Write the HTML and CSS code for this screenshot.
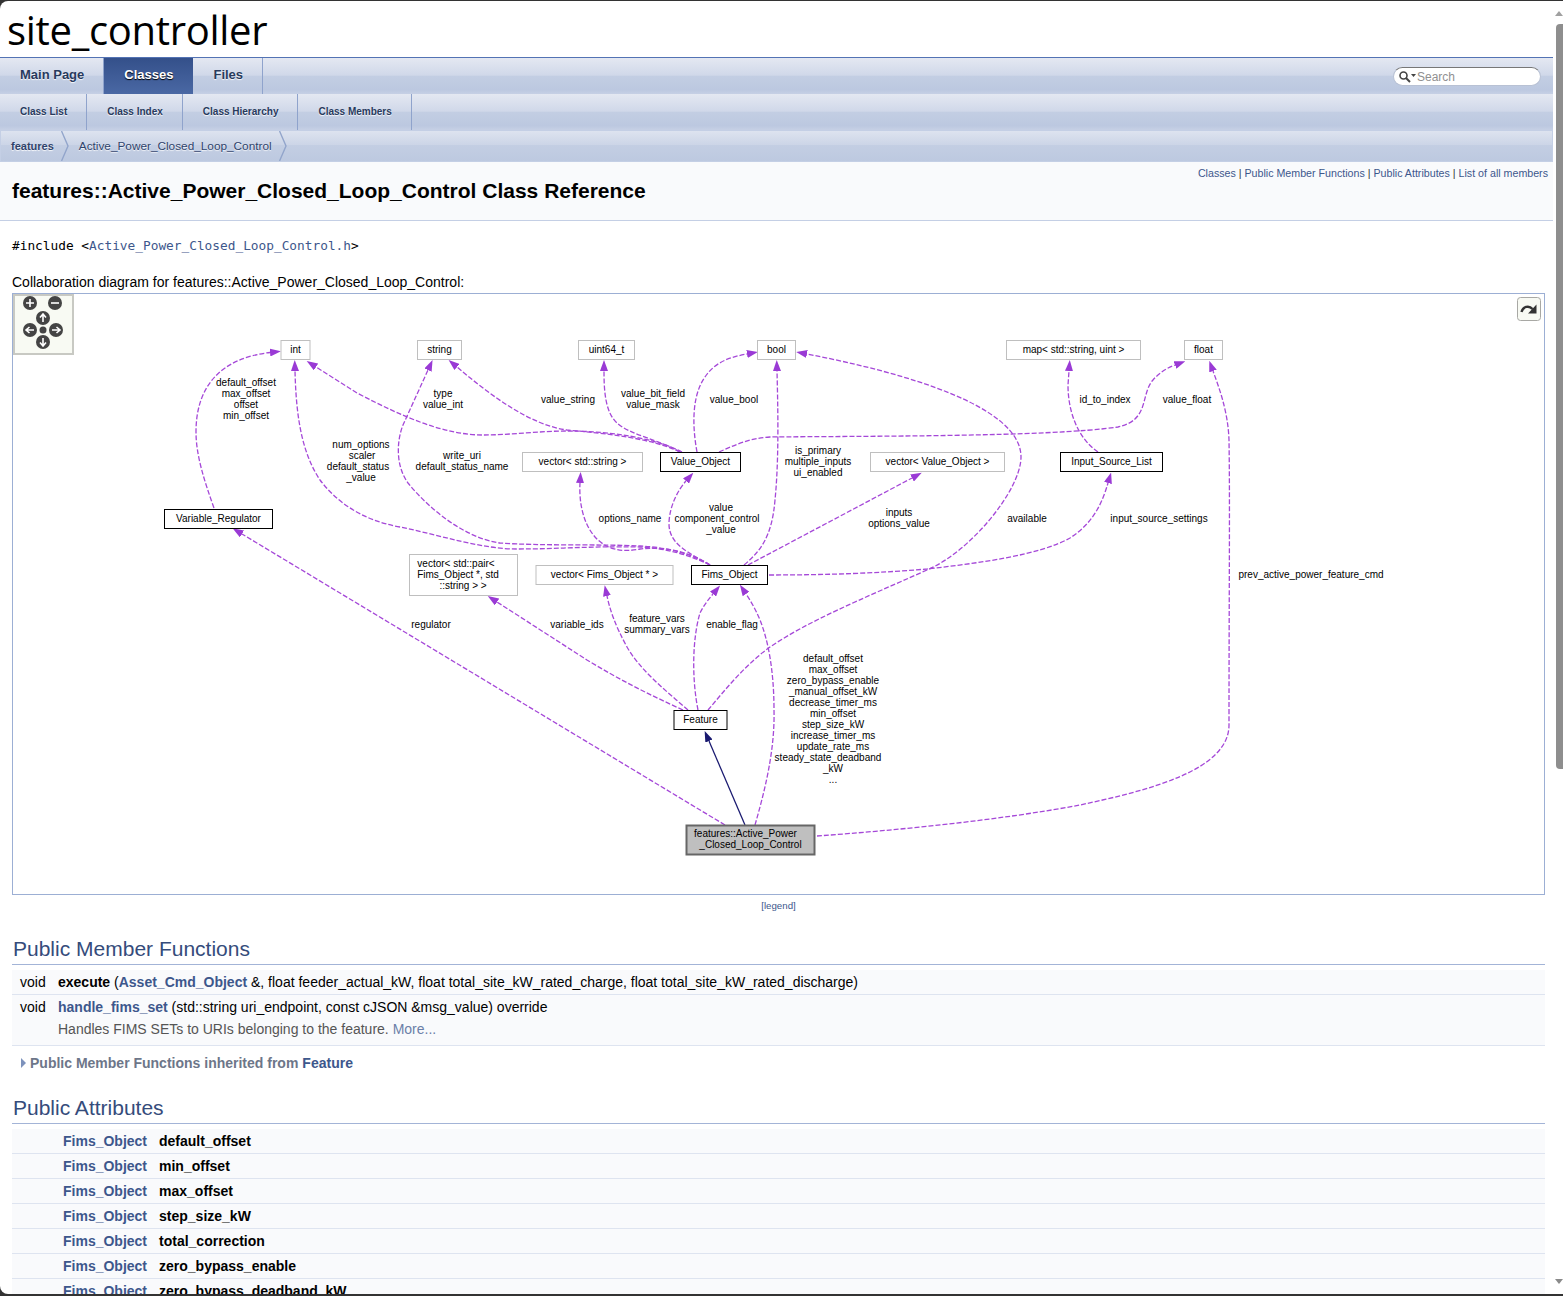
FILE: index.html
```html
<!DOCTYPE html>
<html>
<head>
    <title>site_controller: features::Active_Power_Closed_Loop_Control Class Reference</title>
    <link rel="stylesheet" href="styles.css">
</head>
<body>
<div class="window">
<div class="page">
    <div class="titlearea">site_controller</div>

    <div class="tabs">
        <a class="tab">Main Page</a>
        <a class="tab current">Classes</a>
        <a class="tab">Files</a>
        <div class="search">
            <svg class="search-icon" width="18" height="14" viewBox="0 0 18 14">
                <circle cx="5.5" cy="5.5" r="3.5" class="lens"/>
                <path d="M8 8l4 4" class="handle"/>
                <path d="M13 4h5l-2.5 3z" class="caret"/>
            </svg>
            <span>Search</span>
        </div>
    </div>
    <div class="tabs tabs2">
        <a class="tab">Class List</a>
        <a class="tab">Class Index</a>
        <a class="tab">Class Hierarchy</a>
        <a class="tab">Class Members</a>
    </div>
    <div class="navpath">
        <a class="crumb strong">features</a>
        <svg class="chevron" width="8" height="30" viewBox="0 0 8 30"><path d="M0.5 0L7 15L0.5 30"/></svg>
        <a class="crumb">Active_Power_Closed_Loop_Control</a>
        <svg class="chevron" width="8" height="30" viewBox="0 0 8 30"><path d="M0.5 0L7 15L0.5 30"/></svg>
    </div>

    <div class="header">
        <div class="summary"><a>Classes</a> | <a>Public Member Functions</a> | <a>Public Attributes</a> | <a>List of all members</a></div>
        <h1>features::Active_Power_Closed_Loop_Control Class Reference</h1>
    </div>

    <div class="contents">
        <p class="include">#include &lt;<a>Active_Power_Closed_Loop_Control.h</a>&gt;</p>
        <p class="diagram-title">Collaboration diagram for features::Active_Power_Closed_Loop_Control:</p>

        <div class="diagram">
            <svg width="1531" height="600" viewBox="13 294 1531 600">
                <defs>
                    <marker id="head" markerUnits="userSpaceOnUse" markerWidth="11" markerHeight="8" refX="0" refY="4" orient="auto">
                        <path d="M0 0L11 4L0 8z" class="head-purple"/>
                    </marker>
                    <marker id="head-navy" markerUnits="userSpaceOnUse" markerWidth="11" markerHeight="8" refX="0" refY="4" orient="auto">
                        <path d="M0 0L11 4L0 8z" class="head-navy"/>
                    </marker>
                </defs>

                <!-- edges -->
                <g class="edges">
                    <path d="M214 508C204 480 196 455 196 432C196 385 222 358 270 352.5"/>
                    <path d="M682 452C655 438 610 431 567 431C540 431 510 435 483 435C445 435 405 418 357 393L316 367"/>
                    <path d="M710 565C690 555 665 548 640 547C590 546 560 549 517 549C480 549 440 535 400 527C360 520 335 500 320 480C300 450 296 410 295 371"/>
                    <path d="M680 452C650 438 610 434 567 430C530 425 490 395 457 367"/>
                    <path d="M710 565C690 553 665 547 640 546C600 544 540 546 500 543C465 538 430 510 408 483C395 465 397 440 403 425L428 370"/>
                    <path d="M680 452C660 440 630 435 617 423C605 412 604 390 604 371"/>
                    <path d="M697 452C692 425 692 395 705 377C715 362 730 357 747 354"/>
                    <path d="M744 565C762 550 772 535 775 500C779 460 778 410 777 371"/>
                    <path d="M708 710C725 690 745 665 770 647C810 620 860 600 927 570C970 552 1021 490 1021 457C1021 405 900 372 807 354"/>
                    <path d="M719 452C735 445 750 438 770 437C860 436 1050 437 1118 427C1150 420 1140 395 1153 380C1160 372 1167 368 1175 365"/>
                    <path d="M1098 452C1080 440 1068 415 1068 385L1069 371"/>
                    <path d="M710 565C690 553 668 545 669 522C670 505 678 490 686 481"/>
                    <path d="M710 565C690 552 665 546 640 549C625 552 610 551 598 540C582 525 579 500 580 483"/>
                    <path d="M748 565L912 478"/>
                    <path d="M769 575C830 575 880 573 927 569C980 563 1040 555 1070 538C1095 522 1103 500 1108 483"/>
                    <path d="M725 825L242 534"/>
                    <path d="M683 710C650 695 620 680 587 660L497 602"/>
                    <path d="M688 710C665 690 640 670 627 647C615 625 610 610 607 596"/>
                    <path d="M698 710C692 680 692 640 700 613C704 605 708 600 713 594"/>
                    <path d="M755 825C765 790 775 750 774 710C774 670 768 640 760 620C755 608 750 600 746 594"/>
                    <path d="M817 836C900 830 1000 820 1080 805C1150 790 1229 770 1229 725C1229 600 1230 500 1229 440C1228 410 1218 385 1213 371"/>
                </g>
                <path class="edge-navy" d="M745 825L709 741"/>

                <!-- edge labels -->
                <g class="labels">
                    <text x="246" y="386">default_offset</text>
                    <text x="246" y="397">max_offset</text>
                    <text x="246" y="408">offset</text>
                    <text x="246" y="419">min_offset</text>
                    <text x="443" y="397">type</text>
                    <text x="443" y="408">value_int</text>
                    <text x="568" y="403">value_string</text>
                    <text x="653" y="397">value_bit_field</text>
                    <text x="653" y="408">value_mask</text>
                    <text x="734" y="403">value_bool</text>
                    <text x="1105" y="403">id_to_index</text>
                    <text x="1187" y="403">value_float</text>
                    <text x="361" y="448">num_options</text>
                    <text x="362" y="459">scaler</text>
                    <text x="358" y="470">default_status</text>
                    <text x="361" y="481">_value</text>
                    <text x="462" y="459">write_uri</text>
                    <text x="462" y="470">default_status_name</text>
                    <text x="818" y="454">is_primary</text>
                    <text x="818" y="465">multiple_inputs</text>
                    <text x="818" y="476">ui_enabled</text>
                    <text x="721" y="511">value</text>
                    <text x="717" y="522">component_control</text>
                    <text x="721" y="533">_value</text>
                    <text x="630" y="522">options_name</text>
                    <text x="1027" y="522">available</text>
                    <text x="1159" y="522">input_source_settings</text>
                    <text x="899" y="516">inputs</text>
                    <text x="899" y="527">options_value</text>
                    <text x="1311" y="578">prev_active_power_feature_cmd</text>
                    <text x="431" y="628">regulator</text>
                    <text x="577" y="628">variable_ids</text>
                    <text x="657" y="622">feature_vars</text>
                    <text x="657" y="633">summary_vars</text>
                    <text x="732" y="628">enable_flag</text>
                    <text x="833" y="662">default_offset</text>
                    <text x="833" y="673">max_offset</text>
                    <text x="833" y="684">zero_bypass_enable</text>
                    <text x="833" y="695">_manual_offset_kW</text>
                    <text x="833" y="706">decrease_timer_ms</text>
                    <text x="833" y="717">min_offset</text>
                    <text x="833" y="728">step_size_kW</text>
                    <text x="833" y="739">increase_timer_ms</text>
                    <text x="833" y="750">update_rate_ms</text>
                    <text x="828" y="761">steady_state_deadband</text>
                    <text x="833" y="772">_kW</text>
                    <text x="833" y="783">...</text>
                </g>

                <!-- undocumented nodes -->
                <g class="node-grey">
                    <rect x="281" y="340.5" width="29" height="19"/>
                    <rect x="417.5" y="340.5" width="44" height="19"/>
                    <rect x="578.5" y="340.5" width="56" height="19"/>
                    <rect x="757.5" y="340.5" width="38" height="19"/>
                    <rect x="1006.5" y="340.5" width="134" height="19"/>
                    <rect x="1184.5" y="340.5" width="38" height="19"/>
                    <rect x="522.5" y="452.5" width="120" height="19"/>
                    <rect x="870.5" y="452.5" width="134" height="19"/>
                    <rect x="409.5" y="554.5" width="108" height="41"/>
                    <rect x="536" y="565.5" width="137" height="19"/>
                </g>
                <!-- documented nodes -->
                <g class="node">
                    <rect x="660.5" y="452.5" width="80" height="19"/>
                    <rect x="1060.5" y="452.5" width="102" height="19"/>
                    <rect x="164.5" y="509.5" width="108" height="19"/>
                    <rect x="691.5" y="565.5" width="76" height="19"/>
                    <rect x="674" y="710.5" width="53" height="19"/>
                </g>
                <rect class="node-main" x="686.5" y="825.5" width="128" height="29"/>

                <g class="node-text">
                    <text x="295.5" y="353">int</text>
                    <text x="439.5" y="353">string</text>
                    <text x="606.5" y="353">uint64_t</text>
                    <text x="776.5" y="353">bool</text>
                    <text x="1073.5" y="353">map&lt; std::string, uint &gt;</text>
                    <text x="1203.5" y="353">float</text>
                    <text x="582.5" y="465">vector&lt; std::string &gt;</text>
                    <text x="700.5" y="465">Value_Object</text>
                    <text x="937.5" y="465">vector&lt; Value_Object &gt;</text>
                    <text x="1111.5" y="465">Input_Source_List</text>
                    <text x="218.5" y="522">Variable_Regulator</text>
                    <text x="604.5" y="578">vector&lt; Fims_Object * &gt;</text>
                    <text x="729.5" y="578">Fims_Object</text>
                    <text x="700.5" y="723">Feature</text>
                    <text x="745.5" y="837">features::Active_Power</text>
                    <text x="750.5" y="848">_Closed_Loop_Control</text>
                    <text x="456" y="567">vector&lt; std::pair&lt;</text>
                    <text x="458" y="578">Fims_Object *, std</text>
                    <text x="463" y="589">::string &gt; &gt;</text>
                </g>

                <!-- pan and zoom control -->
                <g class="panel">
                    <rect x="14" y="295" width="59" height="59"/>
                </g>
                <g class="panel-btn">
                    <circle cx="30" cy="303" r="7"/>
                    <circle cx="55" cy="303" r="7"/>
                    <circle cx="43" cy="318" r="7"/>
                    <circle cx="30" cy="330" r="7"/>
                    <circle cx="43" cy="330" r="3.5"/>
                    <circle cx="56" cy="330" r="7"/>
                    <circle cx="43" cy="342" r="7"/>
                </g>
                <g class="panel-glyph">
                    <path d="M26 303h8M30 299v8"/>
                    <path d="M51 303h8"/>
                    <path d="M43 322v-7M40 317.5l3-3.5l3 3.5"/>
                    <path d="M34 330h-7M29.5 327l-3.5 3l3.5 3"/>
                    <path d="M52 330h7M56.5 327l3.5 3l-3.5 3"/>
                    <path d="M43 338v7M40 342.500l3 3.500l3-3.500"/>
                </g>

                <!-- full screen button -->
                <rect class="full-btn" x="1517.5" y="297.5" width="23" height="23" rx="3"/>
                <path class="full-arrow" d="M1521.500 312C1523 306.500 1529 305 1532.500 309"/>
                <path class="full-tip" d="M1536.500 304.500V313.500H1528z"/>
            </svg>
        </div>
        <div class="legend">[legend]</div>

        <h2>Public Member Functions</h2>
        <div class="memberlist">
            <div class="member">
                <span class="type">void</span>
                <span class="decl"><b>execute</b> (<a>Asset_Cmd_Object</a> &amp;, float feeder_actual_kW, float total_site_kW_rated_charge, float total_site_kW_rated_discharge)</span>
            </div>
            <div class="member">
                <span class="type">void</span>
                <div class="decl">
                    <a>handle_fims_set</a> (std::string uri_endpoint, const cJSON &amp;msg_value) override
                    <div class="brief">Handles FIMS SETs to URIs belonging to the feature. <span class="more">More...</span></div>
                </div>
            </div>
        </div>
        <div class="inherited"><span class="arrow"></span>Public Member Functions inherited from <a>Feature</a></div>

        <h2 class="attrs">Public Attributes</h2>
        <div class="memberlist">
            <div class="member attr"><a class="attr-type">Fims_Object</a><b>default_offset</b></div>
            <div class="member attr"><a class="attr-type">Fims_Object</a><b>min_offset</b></div>
            <div class="member attr"><a class="attr-type">Fims_Object</a><b>max_offset</b></div>
            <div class="member attr"><a class="attr-type">Fims_Object</a><b>step_size_kW</b></div>
            <div class="member attr"><a class="attr-type">Fims_Object</a><b>total_correction</b></div>
            <div class="member attr"><a class="attr-type">Fims_Object</a><b>zero_bypass_enable</b></div>
            <div class="member attr"><a class="attr-type">Fims_Object</a><b>zero_bypass_deadband_kW</b></div>
        </div>
    </div>
</div>
<div class="scrollbar">
    <div class="scroll-up"></div>
    <div class="scroll-thumb"></div>
    <div class="scroll-down"></div>
</div>
</div>
</body>
</html>
```

FILE: styles.css
```css
html, body {
    margin: 0;
    padding: 0;
    height: 100%;
    overflow: hidden;
    background-color: #333;
}

body {
    font-family: "Liberation Sans", Arial, sans-serif;
    font-size: 14px;
    color: #000;
}

a {
    color: #3d578c;
}

.window {
    display: flex;
    height: 1293px;
    margin-top: 1px;
    background-color: #fff;
    border-radius: 8px 0 0 8px;
    overflow: hidden;
}

.page {
    flex: 1;
    min-width: 0;
    overflow: hidden;
}

.titlearea {
    font-family: "Open Sans", sans-serif;
    font-size: 40px;
    letter-spacing: -0.3px;
    line-height: 58px;
    height: 56px;
    padding-left: 7px;
    border-bottom: 1px solid #5373b4;
}

/* tab bars */
.tabs {
    display: flex;
    height: 36px;
    background: linear-gradient(#e4e8f2 0, #d0d8e9 48%, #c3cee3 50%, #bcc8e0 88%, #c6d0e5 100%);
}

.tab {
    display: block;
    padding: 0 19px 0 20px;
    line-height: 34px;
    font-size: 13px;
    font-weight: bold;
    color: #283a5d;
    text-shadow: 0 1px 1px rgba(255, 255, 255, 0.9);
    border-right: 1px solid #8fa3cc;
    height: 36px;
    box-sizing: border-box;
}

.tab.current {
    padding-right: 20px;
    color: #fff;
    background: linear-gradient(#34508a, #4a68a4);
    text-shadow: 0 1px 1px #000;
    border-right: none;
}

.tabs2 .tab {
    font-size: 10px;
    line-height: 36px;
}

.search {
    display: flex;
    align-items: center;
    margin: 9px 12px 0 auto;
    width: 148px;
    height: 19px;
    box-sizing: border-box;
    background-color: #fff;
    border-radius: 10px;
    border: 1px solid #b8c1d4;
    border-top-color: #777;
    font-size: 12px;
    color: #909090;
    padding-left: 4px;
}

.search-icon {
    margin-right: 1px;
}

.lens {
    fill: none;
    stroke: #444;
    stroke-width: 1.6;
}

.handle {
    stroke: #444;
    stroke-width: 2;
}

.caret {
    fill: #444;
}

/* breadcrumb */
.navpath {
    display: flex;
    align-items: center;
    height: 32px;
    box-sizing: border-box;
    border: 1px solid #c4cfe5;
    background: linear-gradient(#dde3ef 0, #ccd5e7 46%, #c3cee3 48%, #bdc9e0 100%);
    padding-left: 10px;
    font-size: 11.8px;
}

.crumb {
    color: #2f436b;
    text-shadow: 0 1px 1px rgba(255, 255, 255, 0.9);
}

.crumb.strong {
    font-size: 11px;
    font-weight: bold;
    margin-right: 7px;
}

.chevron {
    margin-right: 10px;
    fill: none;
    stroke: #92a5cb;
    stroke-width: 1.4;
}

.navpath .crumb + .chevron + .crumb {
    margin-right: 7px;
}

/* page header */
.header {
    height: 58px;
    background-color: #f9fafc;
    border-bottom: 1px solid #c4cfe5;
}

.summary {
    float: right;
    font-size: 10.67px;
    line-height: 14px;
    padding: 4px 5px 0 0;
    color: #333;
}

h1 {
    margin: 0;
    padding: 17px 0 0 12px;
    font-size: 21px;
    line-height: 24px;
    font-weight: bold;
}

/* contents */
.contents {
    padding: 0 8px 0 12px;
}

.include {
    margin: 0;
    padding-top: 17px;
    font-family: "DejaVu Sans Mono", monospace;
    font-size: 12.8px;
    line-height: 15px;
}

.diagram-title {
    margin: 0;
    padding-top: 21px;
    line-height: 16px;
    height: 16px;
}

.diagram {
    border: 1px solid #9cafd4;
    height: 600px;
    margin-top: 3px;
}

.diagram svg {
    display: block;
}

.edges path {
    fill: none;
    stroke: #a548d8;
    stroke-width: 1.3;
    stroke-dasharray: 5 2;
    marker-end: url(#head);
}

.head-purple {
    fill: #9a3ad5;
}

.head-navy {
    fill: #191970;
}

.edge-navy {
    fill: none;
    stroke: #191970;
    stroke-width: 1.25;
    marker-end: url(#head-navy);
}

.labels text,
.node-text text {
    font-family: "Liberation Sans", Arial, sans-serif;
    font-size: 10px;
    text-anchor: middle;
    fill: #000;
}

.node-grey rect {
    fill: #fff;
    stroke: #bfbfbf;
}

.node rect {
    fill: #fff;
    stroke: #000;
}

.node-main {
    fill: #bfbfbf;
    stroke: #666;
    stroke-width: 2;
}

.panel rect {
    fill: #f8faf3;
    stroke: #c8c9c3;
    stroke-width: 2;
}

.panel-btn circle {
    fill: #444;
}

.panel-glyph path {
    fill: none;
    stroke: #fff;
    stroke-width: 1.6;
}

.full-btn {
    fill: #f8faf3;
    stroke: #a8a8a4;
}

.full-arrow {
    fill: none;
    stroke: #333;
    stroke-width: 2.4;
}

.full-tip {
    fill: #333;
}

.legend {
    margin-top: 5px;
    text-align: center;
    font-size: 9.7px;
    line-height: 12px;
    color: #3d578c;
}

h2 {
    margin: 0;
    padding: 24px 0 3px 1px;
    font-size: 21px;
    line-height: 25px;
    font-weight: normal;
    color: #354c7b;
    border-bottom: 1px solid #a3b4d7;
}

h2.attrs {
    padding-top: 15px;
}

.memberlist {
    margin-top: 5px;
}

.member {
    display: flex;
    padding: 3px 0 3px 8px;
    line-height: 18px;
    background-color: #f9fafc;
    border-bottom: 1px solid #dee4f0;
}

.member .type {
    width: 38px;
    flex: none;
}

.decl a {
    font-weight: bold;
}

.brief {
    margin-top: 4px;
    padding-bottom: 4px;
    color: #555;
}

.more {
    color: #6b7fa8;
}

.inherited {
    display: flex;
    align-items: center;
    height: 34px;
    padding-left: 9px;
    font-weight: bold;
    color: #6d7689;
}

.inherited a {
    margin-left: 4px;
}

.arrow {
    width: 0;
    height: 0;
    margin-right: 4px;
    border-left: 5px solid #7d92bc;
    border-top: 5px solid transparent;
    border-bottom: 5px solid transparent;
}

.attr {
    padding-left: 51px;
}

.attr-type {
    font-weight: bold;
    margin-right: 12px;
}

/* scrollbar */
.scrollbar {
    display: flex;
    flex-direction: column;
    flex: none;
    width: 10px;
    background-color: #fff;
}

.scroll-up {
    width: 0;
    height: 0;
    margin: 10px 0 0 2px;
    border-left: 4px solid transparent;
    border-right: 4px solid transparent;
    border-bottom: 5px solid #a0a0a0;
}

.scroll-thumb {
    margin: 8px 0 0 3px;
    height: 745px;
    background-color: #8e8e8e;
    border-radius: 4px 0 0 4px;
}

.scroll-down {
    width: 0;
    height: 0;
    margin: auto 0 10px 2px;
    border-left: 4px solid transparent;
    border-right: 4px solid transparent;
    border-top: 5px solid #8a8a8a;
}
```
